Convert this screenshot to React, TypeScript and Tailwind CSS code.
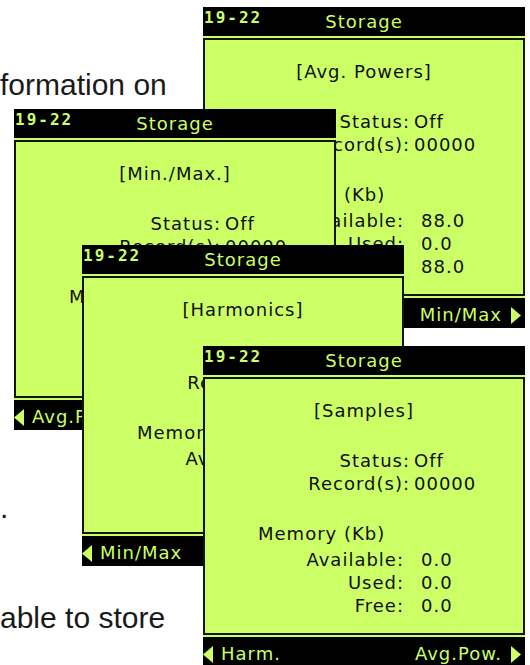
import React from "react";

interface ScreenProps {
  title: string;
  available: string;
  used: string;
  free: string;
  prev: string;
  next: string;
  className: string;
}

const TriLeft = () => (
  <svg width="10" height="17" viewBox="0 0 10 17" className="shrink-0">
    <polygon points="10,0 10,17 0,8.5" fill="#ccff66" />
  </svg>
);

const TriRight = () => (
  <svg width="10" height="17" viewBox="0 0 10 17" className="shrink-0">
    <polygon points="0,0 0,17 10,8.5" fill="#ccff66" />
  </svg>
);

const Screen: React.FC<ScreenProps> = ({ title, available, used, free, prev, next, className }) => {
  const memRows = [
    { label: "Available:", value: available },
    { label: "Used:", value: used },
    { label: "Free:", value: free },
  ];

  return (
    <div
      className={`absolute w-[322px] h-[321px] flex flex-col bg-[#ccff66] font-['DejaVu_Sans',sans-serif] text-[18px] tracking-[1px] ${className}`}
    >
      {/* header */}
      <div className="relative h-[29px] shrink-0 bg-black text-[#ccff66]">
        <span className="absolute left-[1px] top-[3px] font-['DejaVu_Sans_Mono',monospace] font-bold text-[16px] leading-[16px] tracking-[2px]">
          19-22
        </span>
        <div className="text-center leading-[29px]">Storage</div>
      </div>
      <div className="h-[2px] shrink-0" />

      {/* body */}
      <div className="flex-1 border-2 border-[#141414] text-[#0f0f0f] leading-[23px]">
        <p className="mt-[20px] text-center">[{title}]</p>
        <div className="mt-[27px]">
          <div className="flex">
            <span className="w-[205px] text-right">Status:</span>
            <span className="ml-[4px]">Off</span>
          </div>
          <div className="flex">
            <span className="w-[205px] text-right">Record(s):</span>
            <span className="ml-[4px]">00000</span>
          </div>
        </div>
        <p className="mt-[27px] pl-[53px]">Memory (Kb)</p>
        <div className="mt-[3px]">
          {memRows.map((r) => (
            <div key={r.label} className="flex">
              <span className="w-[199px] text-right">{r.label}</span>
              <span className="ml-[17px]">{r.value}</span>
            </div>
          ))}
        </div>
      </div>
      <div className="h-[2px] shrink-0" />

      {/* footer */}
      <div className="h-[30px] shrink-0 bg-black text-[#ccff66] flex items-center justify-between pt-[4px] pr-[4px] leading-[20px]">
        <div className="flex items-center gap-[8px]">
          <TriLeft />
          <span>{prev}</span>
        </div>
        <div className="flex items-center gap-[9px]">
          <span>{next}</span>
          <TriRight />
        </div>
      </div>
    </div>
  );
};

export default function App() {
  return (
    <div className="relative w-[530px] h-[665px] overflow-hidden bg-white text-[#1a1a1a] font-['Liberation_Sans',Arial,sans-serif] text-[30px] leading-[30px]">
      {/* document text behind the screens */}
      <p className="pt-[70px]">formation on</p>
      <p className="mt-[393px]">.</p>
      <p className="mt-[80px]">able to store</p>

      <Screen
        className="left-[203px] top-[7px]"
        title="Avg. Powers"
        available="88.0"
        used="0.0"
        free="88.0"
        prev="Samples"
        next="Min/Max"
      />
      <Screen
        className="left-[14px] top-[109px]"
        title="Min./Max."
        available="88.0"
        used="0.0"
        free="88.0"
        prev="Avg.Pow."
        next="Harm."
      />
      <Screen
        className="left-[82px] top-[245px]"
        title="Harmonics"
        available="88.0"
        used="0.0"
        free="88.0"
        prev="Min/Max"
        next="Samples"
      />
      <Screen
        className="left-[203px] top-[346px]"
        title="Samples"
        available="0.0"
        used="0.0"
        free="0.0"
        prev="Harm."
        next="Avg.Pow."
      />
    </div>
  );
}
